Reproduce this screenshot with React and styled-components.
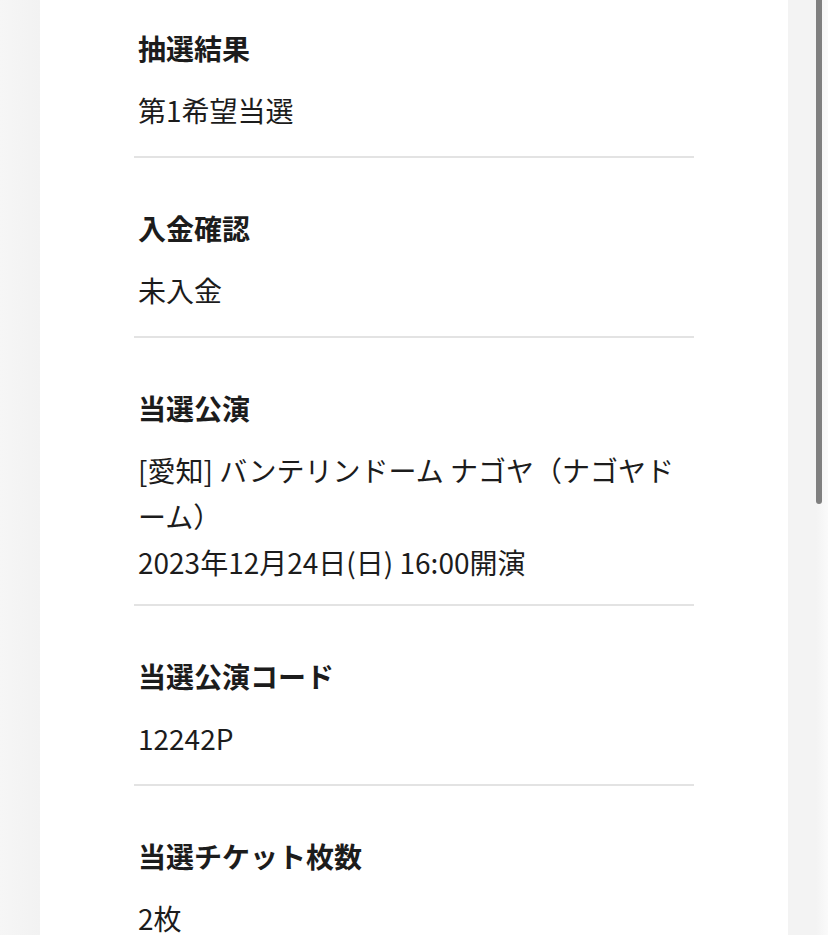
import styled, { createGlobalStyle } from "styled-components";

const GlobalStyle = createGlobalStyle`
  html, body {
    margin: 0;
    padding: 0;
    background: #f4f4f4;
    font-family: "Noto Sans CJK JP", "Noto Sans", sans-serif;
    color: #1c1c1c;
    overflow: hidden;
  }
`;

const results = [
  { label: "抽選結果", lines: ["第1希望当選"] },
  { label: "入金確認", lines: ["未入金"] },
  {
    label: "当選公演",
    lines: [
      "[愛知] バンテリンドーム ナゴヤ（ナゴヤドーム）",
      "2023年12月24日(日) 16:00開演",
    ],
  },
  { label: "当選公演コード", lines: ["12242P"] },
  { label: "当選チケット枚数", lines: ["2枚"] },
];

const App = () => {
  return (
    <Page>
      <GlobalStyle />
      <Gutter />
      <Panel>
        <List>
          {results.map((item, i) => (
            <Item
              key={item.label}
              first={i === 0}
              last={i === results.length - 1}
              multi={item.lines.length > 1}
            >
              <Label>{item.label}</Label>
              {item.lines.map((line) => (
                <Value key={line}>{line}</Value>
              ))}
            </Item>
          ))}
        </List>
      </Panel>
      <ScrollTrack>
        <Thumb />
      </ScrollTrack>
    </Page>
  );
};

const Page = styled.div`
  display: flex;
  height: 935px;
  overflow: hidden;
`;

const Gutter = styled.div`
  width: 40px;
  flex-shrink: 0;
  background: linear-gradient(to right, #f6f6f6, #f2f2f2);
`;

const Panel = styled.div`
  width: 748px;
  flex-shrink: 0;
  background: #ffffff;
`;

const List = styled.div`
  margin-left: 94px;
  width: 560px;
`;

const Item = styled.section`
  padding: ${(p) => (p.first ? "28px" : "50px")} 0 ${(p) => (p.multi ? "19px" : "23px")};
  border-bottom: ${(p) => (p.last ? "none" : "2px solid #e3e3e3")};
`;

const Label = styled.div`
  font-size: 28px;
  line-height: 40px;
  font-weight: 700;
  margin-bottom: 19px;
  padding-left: 4px;
`;

const Value = styled.div`
  font-size: 28px;
  line-height: 46px;
  font-weight: 400;
  padding-left: 4px;
`;

const ScrollTrack = styled.div`
  width: 40px;
  flex-shrink: 0;
  background: linear-gradient(to right, #f3f3f3 70%, #fafafa);
  padding-left: 28px;
  box-sizing: border-box;
`;

const Thumb = styled.div`
  width: 6px;
  height: 504px;
  background: #7f7f7f;
  border-radius: 0 0 3px 3px;
`;

export default App;
